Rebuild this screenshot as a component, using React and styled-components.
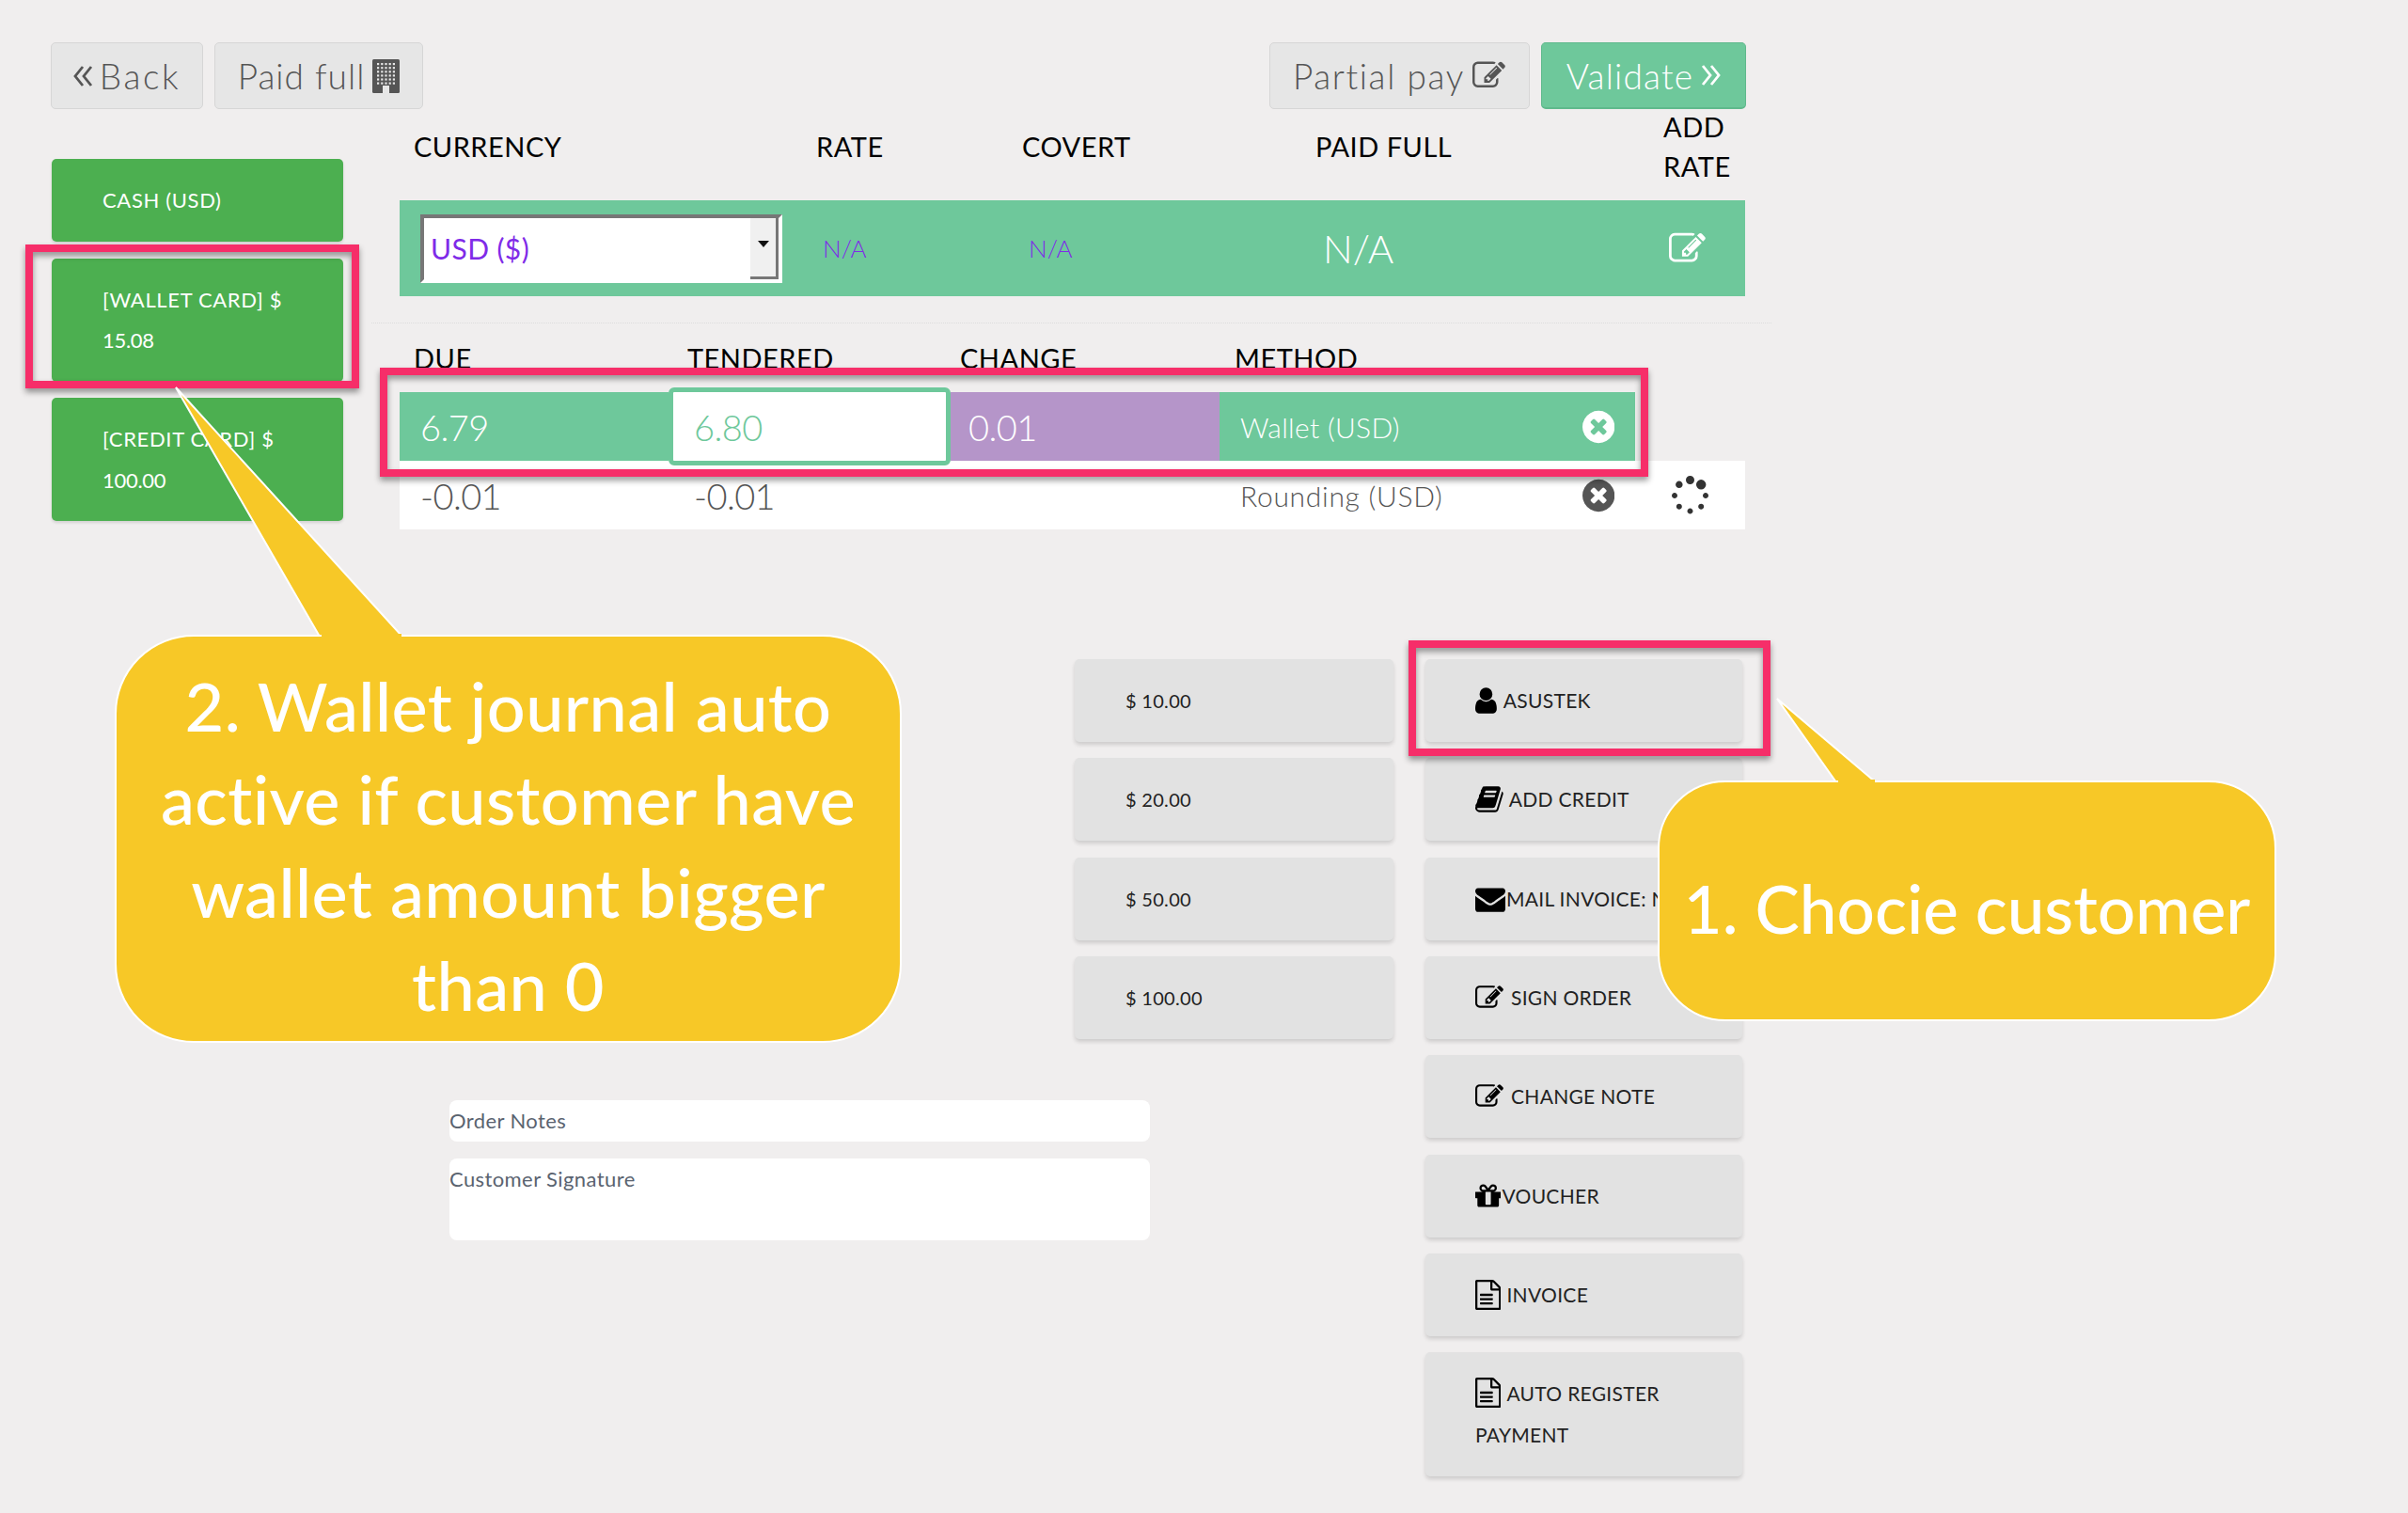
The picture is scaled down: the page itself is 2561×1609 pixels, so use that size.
import React from 'react';
import styled, { createGlobalStyle } from 'styled-components';

const UI = `Lato, "Open Sans", sans-serif`;

const paths = {
  edit: 'M888 1184l116-116-152-152-116 116v56h96v96h56zm440-720q-16-16-33 1l-350 350q-17 17-1 33t33-1l350-350q17-17 1-33zm80 594v190q0 119-84.5 203.5t-203.5 84.5h-832q-119 0-203.5-84.5t-84.5-203.5v-832q0-119 84.5-203.5t203.5-84.5h832q63 0 117 25 15 7 18 23 3 17-9 29l-49 49q-14 14-32 8-23-6-45-6h-832q-66 0-113 47t-47 113v832q0 66 47 113t113 47h832q66 0 113-47t47-113v-126q0-13 9-22l64-64q15-15 35-7t20 29zm-96-738l288 288-672 672h-288v-288zm444 132l-92 92-288-288 92-92q28-28 68-28t68 28l152 152q28 28 28 68t-28 68z',
  file: 'M1596 380q28 28 48 76t20 88v1152q0 40-28 68t-68 28h-1344q-40 0-68-28t-28-68v-1600q0-40 28-68t68-28h896q40 0 88 20t76 48zm-444-244v376h376q-10-29-22-41l-313-313q-12-12-41-22zm384 1528v-1024h-416q-40 0-68-28t-28-68v-416h-768v1536h1280zm-1128-800q0-14 9-23t23-9h704q14 0 23 9t9 23v64q0 14-9 23t-23 9h-704q-14 0-23-9t-9-23v-64zm736 224q14 0 23 9t9 23v64q0 14-9 23t-23 9h-704q-14 0-23-9t-9-23v-64q0-14 9-23t23-9h704zm0 256q14 0 23 9t9 23v64q0 14-9 23t-23 9h-704q-14 0-23-9t-9-23v-64q0-14 9-23t23-9h704z',
  book: 'M1703 478q40 57 18 129l-275 906q-19 64-76.5 107.5t-122.5 43.5h-923q-77 0-148.5-53.5t-99.5-131.5q-24-67-2-127 0-4 3-27t4-37q1-8-3-21.5t-3-19.5q2-11 8-21t16.5-23.5 16.5-23.5q23-38 45-91.5t30-91.5q3-10 .5-30t-.5-28q3-11 17-28t17-23q21-36 42-92t25-90q1-9-2.5-32t.5-28q4-13 22-30.5t22-22.5q19-26 42.5-84.5t27.5-96.5q1-8-3-25.5t-2-26.5q2-8 9-18t18-23 17-21q8-12 16.5-30.5t15-35 16-36 19.5-32 26.5-23.5 36-11.5 47.5 5.5l-1 3q38-9 51-9h761q74 0 114 56t18 130l-274 906q-36 119-71.5 153.5t-128.5 34.5h-869q-27 0-38 15-11 16-1 43 24 70 144 70h923q29 0 56-15.5t35-41.5l300-987q7-22 5-57 38 15 59 43zm-1064 2q-4 13 2 22.5t20 9.5h608q13 0 25.5-9.5t16.5-22.5l21-64q4-13-2-22.5t-20-9.5h-608q-13 0-25.5 9.5t-16.5 22.5zm-83 256q-4 13 2 22.5t20 9.5h608q13 0 25.5-9.5t16.5-22.5l21-64q4-13-2-22.5t-20-9.5h-608q-13 0-25.5 9.5t-16.5 22.5z',
  user: 'M1536 1399q0 109-62.5 187t-150.5 78h-854q-88 0-150.5-78t-62.5-187q0-85 8.5-160.5t31.5-152 58.5-131 94-89 134.5-34.5q131 128 313 128t313-128q76 0 134.5 34.5t94 89 58.5 131 31.5 152 8.5 160.5zm-256-887q0 159-112.5 271.5t-271.5 112.5-271.5-112.5-112.5-271.5 112.5-271.5 271.5-112.5 271.5 112.5 112.5 271.5z',
  envelope: 'M1792 710v794q0 66-47 113t-113 47h-1472q-66 0-113-47t-47-113v-794q44 49 101 87 362 246 497 345 57 42 92.5 65.5t94.5 48 110 24.5h2q51 0 110-24.5t94.5-48 92.5-65.5q170-123 498-345 57-39 100-87zm0-294q0 79-49 151t-122 123q-376 261-468 325-10 7-42.5 30.5t-54 38-52 32.5-57.5 27-50 9h-2q-23 0-50-9t-57.5-27-52-32.5-54-38-42.5-30.5q-91-64-262-182.5t-205-142.5q-62-42-117-115.5t-55-136.5q0-78 41.5-130t118.5-52h1472q65 0 112.5 47t47.5 113z',
  gift: 'M1056 1356v-716h-320v716q0 25 18 38.5t46 13.5h192q28 0 46-13.5t18-38.5zm-456-844h195l-126-161q-26-31-69-31-40 0-68 28t-28 68 28 68 68 28zm688-96q0-40-28-68t-68-28q-43 0-69 31l-125 161h194q40 0 68-28t28-68zm376 256v320q0 14-9 23t-23 9h-96v416q0 40-28 68t-68 28h-1088q-40 0-68-28t-28-68v-416h-96q-14 0-23-9t-9-23v-320q0-14 9-23t23-9h440q-93 0-158.5-65.5t-65.5-158.5 65.5-158.5 158.5-65.5q107 0 168 77l128 165 128-165q61-77 168-77 93 0 158.5 65.5t65.5 158.5-65.5 158.5-158.5 65.5h440q14 0 23 9t9 23z',
  times: 'M1277 1122q0-26-19-45l-181-181 181-181q19-19 19-45 0-27-19-46l-90-90q-19-19-46-19-26 0-45 19l-181 181-181-181q-19-19-45-19-27 0-46 19l-90 90q-19 19-19 46 0 26 19 45l181 181-181 181q-19 19-19 45 0 27 19 46l90 90q19 19 46 19 26 0 45-19l181-181 181 181q19 19 45 19 27 0 46-19l90-90q19-19 19-46zm387-226q0 209-103 385.5t-279.5 279.5-385.5 103-385.5-103-279.5-279.5-103-385.5 103-385.5 279.5-279.5 385.5-103 385.5 103 279.5 279.5 103 385.5z',
  spinner: 'M526 1394q0 53-37.5 90.5t-90.5 37.5q-52 0-90-38t-38-90q0-53 37.5-90.5t90.5-37.5 90.5 37.5 37.5 90.5zm498 206q0 53-37.5 90.5t-90.5 37.5-90.5-37.5-37.5-90.5 37.5-90.5 90.5-37.5 90.5 37.5 37.5 90.5zm-704-704q0 53-37.5 90.5t-90.5 37.5-90.5-37.5-37.5-90.5 37.5-90.5 90.5-37.5 90.5 37.5 37.5 90.5zm1202 498q0 52-38 90t-90 38q-53 0-90.5-37.5t-37.5-90.5 37.5-90.5 90.5-37.5 90.5 37.5 37.5 90.5zm-964-996q0 66-47 113t-113 47-113-47-47-113 47-113 113-47 113 47 47 113zm1170 498q0 53-37.5 90.5t-90.5 37.5-90.5-37.5-37.5-90.5 37.5-90.5 90.5-37.5 90.5 37.5 37.5 90.5zm-640-704q0 80-56 136t-136 56-136-56-56-136 56-136 136-56 136 56 56 136zm530 206q0 93-66 158.5t-158 65.5q-93 0-158.5-65.5t-65.5-158.5q0-92 65.5-158t158.5-66q92 0 158 66t66 158z',
};

const boxes = {
  edit: '0 0 1850 1792',
  file: '128 0 1536 1792',
  book: '64 0 1664 1792',
  user: '256 0 1280 1792',
  envelope: '0 0 1792 1792',
  gift: '128 0 1536 1792',
  times: '128 0 1536 1792',
  spinner: '64 0 1664 1792',
};

const IconSvg = styled.svg`
  height: ${(p) => p.$s}px;
  width: ${(p) => p.$w}px;
  fill: currentColor;
  flex: none;
  margin-right: ${(p) => p.$mr || 0}px;
  vertical-align: ${(p) => p.$va || 'baseline'};
`;

function Icon({ name, size, mr, va }) {
  const vb = boxes[name];
  const [, , w, h] = vb.split(' ').map(Number);
  return (
    <IconSvg viewBox={vb} $s={size} $w={(size * w) / h} $mr={mr} $va={va}>
      <path d={paths[name]} />
    </IconSvg>
  );
}

const ChevSvg = styled.svg`
  width: 21px;
  height: 24px;
  flex: none;
  fill: none;
  stroke: currentColor;
  stroke-width: 2.8;
`;

function Chevrons({ right }) {
  return (
    <ChevSvg viewBox="0 0 21 24">
      {right ? (
        <>
          <polyline points="2,2 10,12 2,22" />
          <polyline points="11,2 19,12 11,22" />
        </>
      ) : (
        <>
          <polyline points="10,2 2,12 10,22" />
          <polyline points="19,2 11,12 19,22" />
        </>
      )}
    </ChevSvg>
  );
}

function BuildingIcon() {
  const dots = [];
  for (let r = 0; r < 6; r += 1) {
    for (let c = 0; c < 5; c += 1) {
      dots.push(<rect key={`${r}-${c}`} x={5 + c * 4.2} y={4 + r * 4.1} width="2.2" height="2.2" fill="#e6e6e6" />);
    }
  }
  return (
    <svg width="29" height="36" viewBox="0 0 29 36">
      <rect width="29" height="36" rx="1.5" fill="#555" />
      {dots}
      <rect x="11" y="28" width="7" height="8" fill="#e6e6e6" />
    </svg>
  );
}

const Global = createGlobalStyle`
  html, body { margin: 0; padding: 0; background: #f0eeee; }
  * { box-sizing: border-box; }
`;

const Page = styled.div`
  position: relative;
  width: 2561px;
  height: 1609px;
  overflow: hidden;
  background: #f0eeee;
  padding: 45px 0 0 54px;
  font-family: ${UI};
  color: #555;
`;

const Toolbar = styled.div`
  display: flex;
  width: 1803px;
  height: 70px;
  gap: 12px;
`;

const ToolButton = styled.div`
  display: flex;
  align-items: center;
  justify-content: center;
  gap: ${(p) => p.$gap ?? 8}px;
  height: 71px;
  width: ${(p) => p.$w}px;
  margin-left: ${(p) => p.$ml || 0}px;
  border: 1.5px solid ${(p) => (p.$primary ? '#5fb98c' : '#d6d6d6')};
  border-bottom-width: ${(p) => (p.$primary ? 2 : 1.5)}px;
  border-radius: 5px;
  background: ${(p) => (p.$primary ? '#6ec89b' : '#e6e6e6')};
  color: ${(p) => (p.$primary ? '#fff' : '#555')};
  font-size: 37px;
  font-weight: 300;
  letter-spacing: ${(p) => p.$ls ?? 1.2}px;
`;

const Body = styled.div`
  display: flex;
  margin-left: 1px;
`;

const PayColumn = styled.div`
  display: flex;
  flex-direction: column;
  gap: 17.5px;
  width: 310px;
  margin-top: 54px;
`;

const PayCard = styled.div`
  display: flex;
  flex-direction: column;
  justify-content: center;
  height: ${(p) => p.$h}px;
  padding-left: 54px;
  border-radius: 5px;
  background: #4caf50;
  color: #fff;
  font-size: 22px;
  line-height: 43.5px;
  letter-spacing: 0.65px;
  box-shadow: 0 2px 3px rgba(0, 0, 0, 0.12);
`;

const Amount = styled.span`
  letter-spacing: -0.3px;
`;

const Main = styled.div`
  width: 1431px;
  margin-left: 60px;
`;

const CurrencyGrid = styled.div`
  display: grid;
  grid-template-columns: 428px 219px 312px 371px 101px;
`;

const Label = styled.div`
  display: flex;
  align-items: center;
  padding-left: ${(p) => p.$pl ?? 15}px;
  padding-bottom: ${(p) => p.$pb || 0}px;
  height: ${(p) => p.$h}px;
  color: #000;
  font-size: 29px;
  font-weight: 400;
  line-height: 42px;
  letter-spacing: 0.5px;
`;

const CurrencyCell = styled.div`
  display: flex;
  align-items: center;
  height: 102px;
  background: #6ec89b;
  padding-left: ${(p) => p.$pl || 0}px;
  color: ${(p) => p.$c || '#fff'};
  font-size: ${(p) => p.$fs || 26}px;
  font-weight: 300;
`;

const SelectBox = styled.div`
  display: flex;
  align-items: stretch;
  justify-content: space-between;
  width: 385px;
  height: 73px;
  margin-left: 22px;
  background: #fff;
  border: 4px solid;
  border-color: #777 #fff #fff #777;
  color: #7f2be8;
  font-size: 30px;
  font-weight: 400;
`;

const SelectText = styled.div`
  display: flex;
  align-items: center;
  padding-left: 7px;
  letter-spacing: 0.4px;
`;

const SelectArrow = styled.div`
  display: flex;
  align-items: center;
  justify-content: center;
  width: 30px;
  background: #f0f0f0;
  border-right: 3px solid #777;
  border-bottom: 3px solid #777;
  &::after {
    content: '';
    border-left: 6px solid transparent;
    border-right: 6px solid transparent;
    border-top: 7px solid #111;
    margin-top: -6px;
  }
`;

const Divider = styled.div`
  width: 1489px;
  margin: 28px 0 0 -30px;
  border-top: 1.5px dotted #ddd;
`;

const PayGrid = styled.div`
  display: grid;
  grid-template-columns: 286px 300px 286px 442px 117px;
`;

const PayCell = styled.div`
  display: flex;
  align-items: center;
  justify-content: ${(p) => (p.$between ? 'space-between' : 'flex-start')};
  height: 73px;
  padding: 0 22px 0 ${(p) => p.$pl ?? 22}px;
  background: ${(p) => p.$bg};
  color: ${(p) => p.$c};
  font-size: ${(p) => p.$fs || 38}px;
  font-weight: 300;
  letter-spacing: ${(p) => p.$ls ?? -0.6}px;
  ${(p) => p.$focus && `
    position: relative;
    margin: -5px 0;
    height: 83px;
    border: 5px solid #6ec89b;
    border-radius: 6px;
    z-index: 1;
  `}
`;

const SpinnerCell = styled.div`
  display: flex;
  align-items: center;
  justify-content: center;
  height: 73px;
  background: ${(p) => (p.$blank ? 'transparent' : '#fff')};
  color: #333;
`;

const Lower = styled.div`
  display: flex;
  margin: 138px 0 0 424px;
  gap: 34px;
`;

const LeftLower = styled.div`
  width: 1004px;
`;

const Presets = styled.div`
  display: flex;
  flex-direction: column;
  gap: 17.33px;
  width: 339px;
  margin-left: 665px;
`;

const Actions = styled.div`
  display: flex;
  flex-direction: column;
  gap: 17.33px;
  width: 337px;
`;

const KeyButton = styled.div`
  display: ${(p) => (p.$block ? 'block' : 'flex')};
  align-items: center;
  gap: ${(p) => p.$gap ?? 6}px;
  min-height: 88px;
  padding: ${(p) => (p.$block ? '22px 53px' : `0 53px 0 ${p.$pl || 53}px`)};
  border-radius: 5px;
  background: #e2e2e2;
  box-shadow: 0 3px 4px rgba(0, 0, 0, 0.14);
  color: #222;
  font-size: ${(p) => p.$fs || 21}px;
  line-height: 44px;
  white-space: nowrap;
  letter-spacing: 0.3px;
  font-weight: 400;
  svg { color: #000; }
`;

const Notes = styled.div`
  display: flex;
  flex-direction: column;
  gap: 18px;
  width: 745px;
  margin-top: 65px;
`;

const NoteField = styled.div`
  height: ${(p) => p.$h}px;
  padding-top: ${(p) => p.$pt}px;
  border-radius: 8px;
  background: #fff;
  color: #5a6370;
  font-size: 22px;
  line-height: 26px;
  font-weight: 400;
  letter-spacing: 0.4px;
`;

const Highlight = styled.div`
  position: absolute;
  left: ${(p) => p.$x}px;
  top: ${(p) => p.$y}px;
  width: ${(p) => p.$w}px;
  height: ${(p) => p.$h}px;
  border: 8px solid #f62e69;
  filter: drop-shadow(0 4px 3px rgba(0, 0, 0, 0.4));
  z-index: 2;
`;

const Tail = styled.svg`
  position: absolute;
  left: 0;
  top: 0;
  width: 2561px;
  height: 1609px;
  z-index: 3;
  pointer-events: none;
`;

const Callout = styled.div`
  position: absolute;
  left: ${(p) => p.$x}px;
  top: ${(p) => p.$y}px;
  width: ${(p) => p.$w}px;
  height: ${(p) => p.$h}px;
  padding-top: 14px;
  border: 2px solid #fff;
  border-radius: ${(p) => p.$r}px;
  background: #f7c827;
  color: #fff;
  display: flex;
  align-items: center;
  justify-content: center;
  text-align: center;
  font-family: Lato, sans-serif;
  font-size: ${(p) => p.$fs}px;
  letter-spacing: ${(p) => p.$ls || 0}px;
  line-height: 99px;
  font-weight: 500;
  z-index: 3;
`;

const Line = styled.div`
  white-space: nowrap;
`;

const TailJoin = styled.div`
  position: absolute;
  left: ${(p) => p.$x}px;
  top: ${(p) => p.$y}px;
  width: ${(p) => p.$w}px;
  height: 5px;
  z-index: 4;
  background: #f7c827;
`;

export default function App() {
  return (
    <Page>
      <Global />
      <Toolbar>
        <ToolButton $w={162} $gap={7} $ls={2.6}><Chevrons />Back</ToolButton>
        <ToolButton $w={222} $ls={1}>Paid full<BuildingIcon /></ToolButton>
        <ToolButton $w={277} $ml={888} $ls={1.6}>Partial pay<Icon name="edit" size={35} /></ToolButton>
        <ToolButton $w={218} $primary>Validate<Chevrons right /></ToolButton>
      </Toolbar>

      <Body>
        <PayColumn>
          <PayCard $h={88}><span>CASH (USD)</span></PayCard>
          <PayCard $h={131}><span>[WALLET CARD] $</span><Amount>15.08</Amount></PayCard>
          <PayCard $h={131}><span>[CREDIT CARD] $</span><Amount>100.00</Amount></PayCard>
        </PayColumn>

        <Main>
          <CurrencyGrid>
            <Label $h={98} $pb={16}>CURRENCY</Label>
            <Label $h={98} $pb={16}>RATE</Label>
            <Label $h={98} $pb={16}>COVERT</Label>
            <Label $h={98} $pb={16}>PAID FULL</Label>
            <Label $h={98} $pb={16} $pl={14}>ADD RATE</Label>
            <CurrencyCell>
              <SelectBox>
                <SelectText>USD ($)</SelectText>
                <SelectArrow />
              </SelectBox>
            </CurrencyCell>
            <CurrencyCell $pl={22} $c="#7f2be8">N/A</CurrencyCell>
            <CurrencyCell $pl={22} $c="#7f2be8">N/A</CurrencyCell>
            <CurrencyCell $pl={23} $fs={42}>N/A</CurrencyCell>
            <CurrencyCell $pl={20}><Icon name="edit" size={39} /></CurrencyCell>
          </CurrencyGrid>

          <Divider />

          <PayGrid>
            <Label $h={73}>DUE</Label>
            <Label $h={73} $pl={20}>TENDERED</Label>
            <Label $h={73} $pl={10}>CHANGE</Label>
            <Label $h={73} $pl={16}>METHOD</Label>
            <Label $h={73} />
            <PayCell $bg="#6ec89b" $c="#fff">6.79</PayCell>
            <PayCell $bg="#fff" $c="#6ec89b" $focus>6.80</PayCell>
            <PayCell $bg="#b595c9" $c="#fff" $pl={19}>0.01</PayCell>
            <PayCell $bg="#6ec89b" $c="#fff" $fs={30} $ls={0.3} $between>
              Wallet (USD)<Icon name="times" size={40} />
            </PayCell>
            <SpinnerCell $blank />
            <PayCell $bg="#fff" $c="#555">-0.01</PayCell>
            <PayCell $bg="#fff" $c="#555" $pl={27}>-0.01</PayCell>
            <PayCell $bg="#fff" $c="#555" />
            <PayCell $bg="#fff" $c="#555" $fs={30} $ls={0.7} $between>
              Rounding (USD)<Icon name="times" size={40} />
            </PayCell>
            <SpinnerCell><Icon name="spinner" size={42} /></SpinnerCell>
          </PayGrid>
        </Main>
      </Body>

      <Lower>
        <LeftLower>
          <Presets>
            <KeyButton $fs={20} $pl={54}>$ 10.00</KeyButton>
            <KeyButton $fs={20} $pl={54}>$ 20.00</KeyButton>
            <KeyButton $fs={20} $pl={54}>$ 50.00</KeyButton>
            <KeyButton $fs={20} $pl={54}>$ 100.00</KeyButton>
          </Presets>
          <Notes>
            <NoteField $h={44} $pt={9}>Order Notes</NoteField>
            <NoteField $h={87} $pt={9}>Customer Signature</NoteField>
          </Notes>
        </LeftLower>
        <Actions>
          <KeyButton $gap={7}><Icon name="user" size={32} />ASUSTEK</KeyButton>
          <KeyButton $gap={6}><Icon name="book" size={32} />ADD CREDIT</KeyButton>
          <KeyButton $gap={1}><Icon name="envelope" size={32} />MAIL INVOICE: NO</KeyButton>
          <KeyButton $gap={7}><Icon name="edit" size={30} />SIGN ORDER</KeyButton>
          <KeyButton $gap={7}><Icon name="edit" size={30} />CHANGE NOTE</KeyButton>
          <KeyButton $gap={1}><Icon name="gift" size={32} />VOUCHER</KeyButton>
          <KeyButton $gap={6}><Icon name="file" size={32} />INVOICE</KeyButton>
          <KeyButton $block><Icon name="file" size={32} mr={6} va="-7px" />AUTO REGISTER<br />PAYMENT</KeyButton>
        </Actions>
      </Lower>

      <Highlight $x={27} $y={260} $w={355} $h={153} />
      <Highlight $x={404} $y={391} $w={1349} $h={116} />
      <Highlight $x={1498} $y={681} $w={385} $h={123} />

      <Tail viewBox="0 0 2561 1609">
        <polygon points="187,412 340,677 428,677" fill="#f7c827" stroke="#fff" strokeWidth="2" />
        <polygon points="1890,743 1953,832 1995,832" fill="#f7c827" stroke="#fff" strokeWidth="2" />
      </Tail>

      <Callout $x={122} $y={675} $w={837} $h={434} $r={84} $fs={72} $ls={0.4}>
        <div>
          <Line>2. Wallet journal auto</Line>
          <Line>active if customer have</Line>
          <Line>wallet amount bigger</Line>
          <Line>than 0</Line>
        </div>
      </Callout>
      <Callout $x={1763} $y={830} $w={658} $h={256} $r={72} $fs={71}>
        <Line>1. Chocie customer</Line>
      </Callout>
      <TailJoin $x={342} $y={674} $w={85} />
      <TailJoin $x={1955} $y={829} $w={39} />
    </Page>
  );
}
